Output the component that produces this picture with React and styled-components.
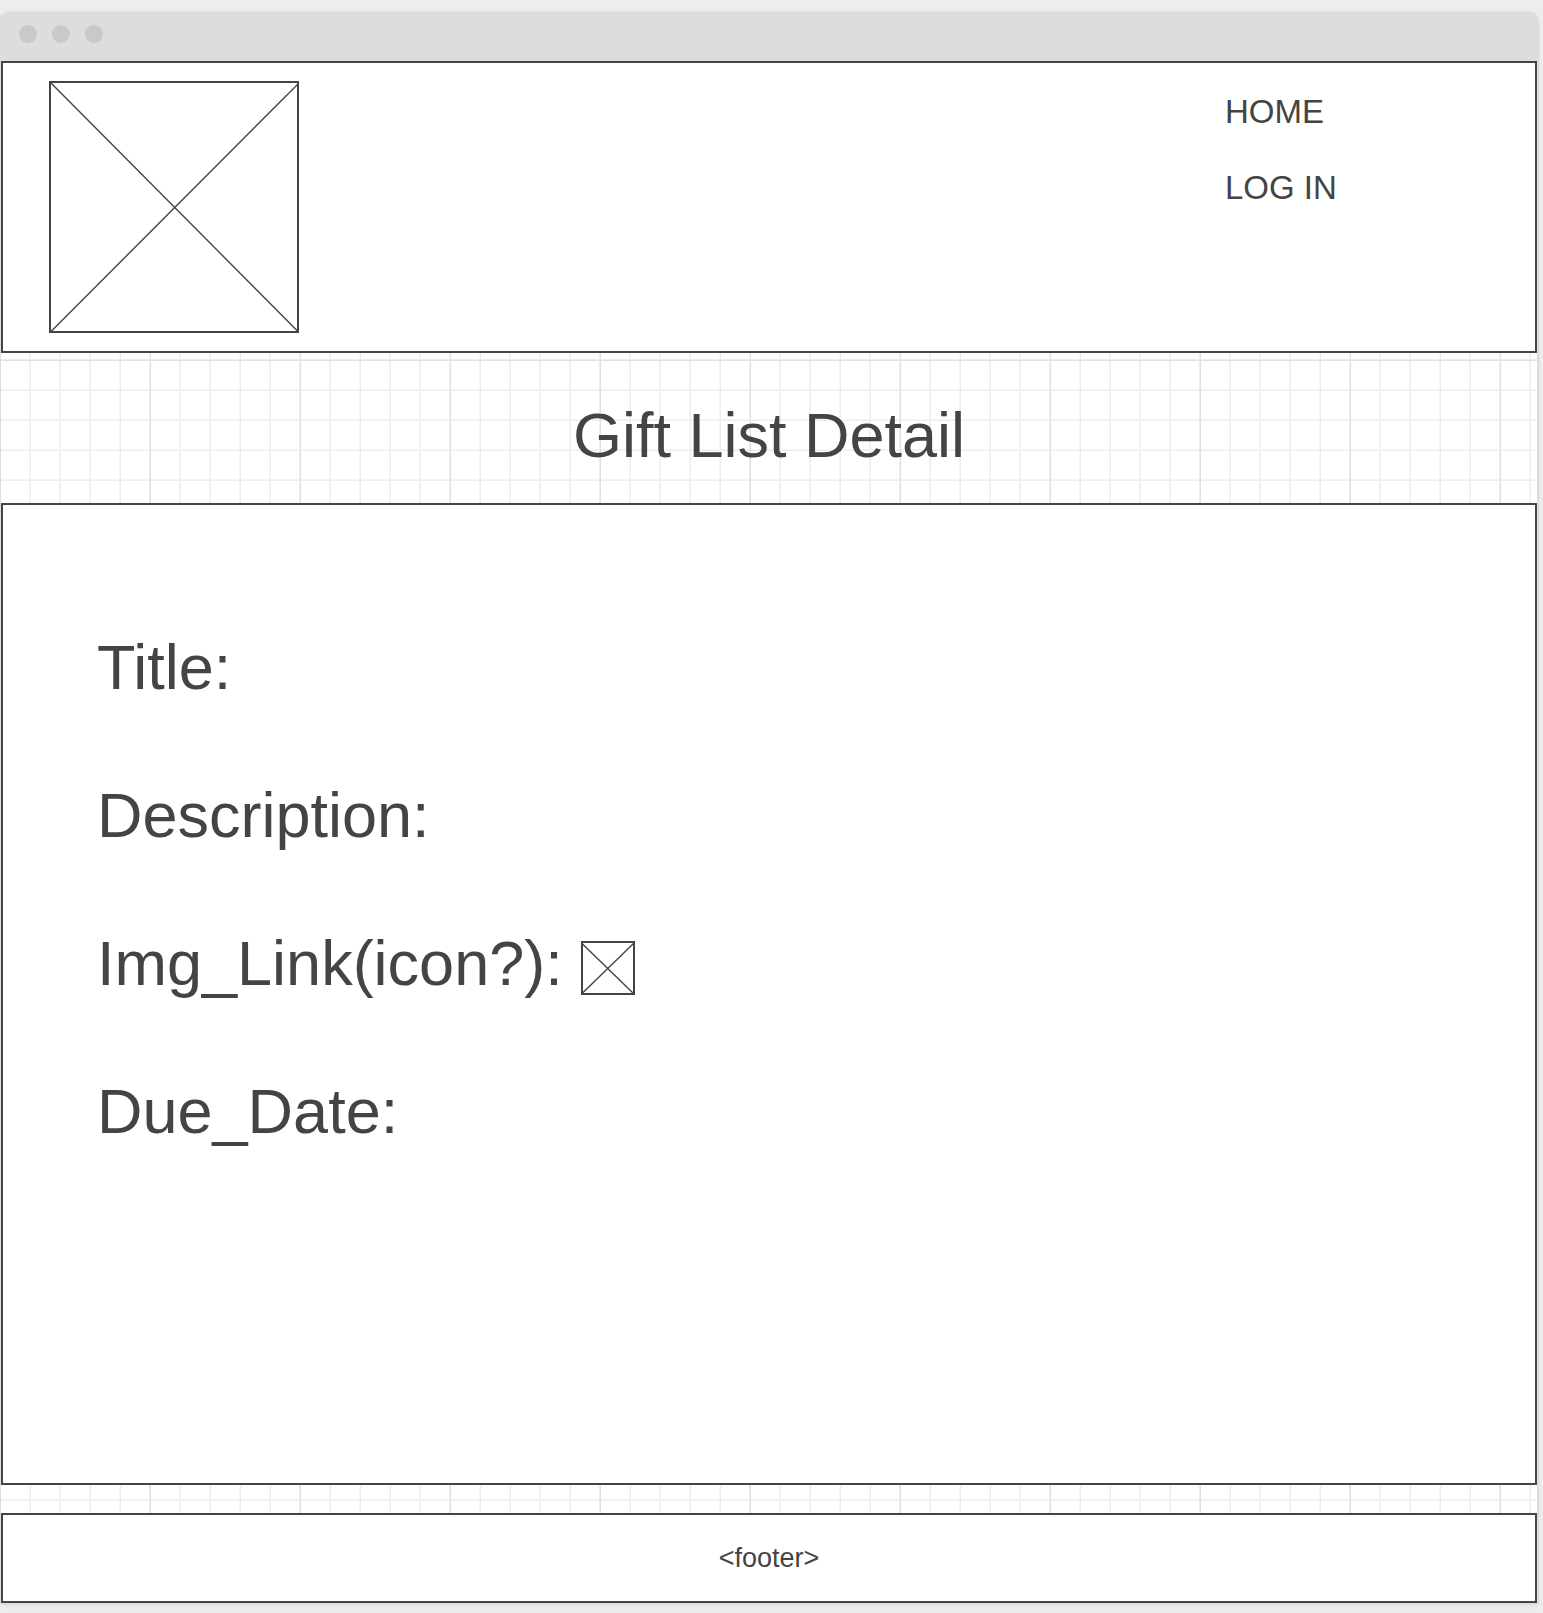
import React from "react";
import styled, { createGlobalStyle } from "styled-components";

const ink = "#444444";

const GlobalStyle = createGlobalStyle`
  * {
    box-sizing: border-box;
  }
  body {
    margin: 0;
    background: #ededed;
    color: ${ink};
    font-family: "Liberation Sans", Arial, sans-serif;
  }
`;

const Page = styled.div`
  display: flex;
  flex-direction: column;
  min-height: 100vh;
  padding: 12px 5px 10px 0;
`;

const Window = styled.div`
  flex: 1;
  display: flex;
  flex-direction: column;
  border-radius: 9px 9px 0 0;
  background: #dddddd;
  box-shadow: 0 0 1px 1px rgba(0, 0, 0, 0.04), 0 2px 4px rgba(0, 0, 0, 0.08);
`;

const TitleBar = styled.div`
  display: flex;
  gap: 15px;
  height: 49px;
  padding: 13px 19px;
`;

const Dot = styled.span`
  width: 18px;
  height: 18px;
  border-radius: 50%;
  background: #c9c9c9;
`;

const Canvas = styled.div`
  flex: 1;
  display: flex;
  flex-direction: column;
  margin: 0 1px;
  background-color: #ffffff;
  background-image:
    linear-gradient(90deg, transparent 148px, #eeeeee 148px 149px, #e0e0e0 149px),
    linear-gradient(180deg, transparent 148px, #eeeeee 148px 149px, #e0e0e0 149px),
    linear-gradient(90deg, transparent 28px, #f5f5f5 28px 29px, #ededed 29px),
    linear-gradient(180deg, transparent 28px, #f5f5f5 28px 29px, #ededed 29px);
  background-size: 150px 150px, 150px 150px, 30px 30px, 30px 30px;
`;

const panel = `
  border: 2px solid ${ink};
  background: #ffffff;
`;

const Header = styled.header`
  ${panel}
  display: flex;
  justify-content: space-between;
  padding: 18px 46px;
`;

const Nav = styled.nav`
  display: flex;
  flex-direction: column;
  align-items: flex-start;
  gap: 38px;
  width: 264px;
  padding-top: 12px;
`;

const NavLink = styled.a`
  color: inherit;
  font-size: 33px;
  line-height: 38px;
  text-decoration: none;
`;

const Heading = styled.h1`
  margin: 0;
  padding: 45px 0 31px;
  font-size: 63px;
  font-weight: 400;
  line-height: 74px;
  text-align: center;
`;

const Main = styled.main`
  ${panel}
  flex: 1;
  display: flex;
  flex-direction: column;
  gap: 74px;
  margin-bottom: 28px;
  padding: 125px 94px;
`;

const Field = styled.div`
  display: flex;
  gap: 18px;
  font-size: 63px;
  line-height: 74px;
`;

const Footer = styled.footer`
  ${panel}
  padding: 27px 0;
  font-size: 27px;
  line-height: 32px;
  text-align: center;
`;

const Picture = styled.svg`
  flex: none;
  display: block;
  width: ${(p) => p.$width}px;
  height: ${(p) => p.$height}px;
  margin-top: ${(p) => p.$top || 0}px;
`;

function Placeholder({ width, height, top, cross, label }) {
  return (
    <Picture
      $width={width}
      $height={height}
      $top={top}
      viewBox={`0 0 ${width} ${height}`}
      fill="none"
      stroke={ink}
      role="img"
      aria-label={label}
    >
      <rect x="1" y="1" width={width - 2} height={height - 2} strokeWidth="2" />
      <path d={cross} strokeWidth="1.4" />
    </Picture>
  );
}

export default function App() {
  return (
    <>
      <GlobalStyle />
      <Page>
        <Window>
          <TitleBar>
            <Dot />
            <Dot />
            <Dot />
          </TitleBar>
          <Canvas>
            <Header>
              <Placeholder
                width={250}
                height={252}
                cross="M2 2 L249 250.5 M249 3 L2 250.5"
                label="Logo"
              />
              <Nav>
                <NavLink href="#home">HOME</NavLink>
                <NavLink href="#login">LOG IN</NavLink>
              </Nav>
            </Header>
            <Heading>Gift List Detail</Heading>
            <Main>
              <Field>Title:</Field>
              <Field>Description:</Field>
              <Field>
                Img_Link(icon?):
                <Placeholder
                  width={54}
                  height={54}
                  top={15}
                  cross="M1 2.5 L52.5 52.5 M52.5 2.5 L1 52.5"
                  label="Gift"
                />
              </Field>
              <Field>Due_Date:</Field>
            </Main>
            <Footer>&lt;footer&gt;</Footer>
          </Canvas>
        </Window>
      </Page>
    </>
  );
}
